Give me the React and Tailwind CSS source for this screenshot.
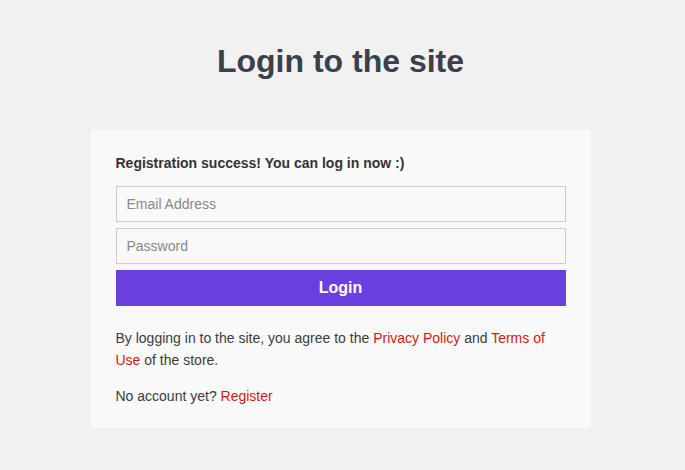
import React from 'react';

const App = () => {
    return (
        <div className="min-h-[470px] bg-[#f1f1f1] pt-[38px] pr-[4px] font-['Liberation_Sans',Arial,sans-serif]">
            <h1 className="text-center text-[32px] leading-[46px] font-bold text-[#3a4148]">Login to the site</h1>

            <div className="mx-auto mt-[46px] w-[500px] bg-[#f9f9f9] px-[25px] pt-[23px] pb-[21px]">
                <p className="text-[14px] leading-[20px] font-bold text-[#333]">Registration success! You can log in now :)</p>

                <form className="mt-[13px] flex flex-col gap-[6px]" onSubmit={e => e.preventDefault()}>
                    <input
                        type="email"
                        placeholder="Email Address"
                        className="h-[36px] border border-[#cccccc] bg-[#f9f9f9] px-[10px] text-[14px] text-[#333] placeholder:text-[#888] outline-none"
                    />
                    <input
                        type="password"
                        placeholder="Password"
                        className="h-[36px] border border-[#cccccc] bg-[#f9f9f9] px-[10px] text-[14px] text-[#333] placeholder:text-[#888] outline-none"
                    />
                    <button type="submit" className="h-[36px] bg-[#6a3fe0] text-[16px] font-bold text-white">
                        Login
                    </button>
                </form>

                <p className="mt-[21px] text-[14px] leading-[22px] text-[#3c3c3c]">
                    By logging in to the site, you agree to the <a href="#" className="text-[#d21a10]">Privacy Policy</a> and{' '}
                    <a href="#" className="text-[#d21a10]">Terms of Use</a> of the store.
                </p>
                <p className="mt-[14px] text-[14px] leading-[22px] text-[#3c3c3c]">
                    No account yet? <a href="#" className="text-[#d21a10]">Register</a>
                </p>
            </div>
        </div>
    );
};

export default App;
